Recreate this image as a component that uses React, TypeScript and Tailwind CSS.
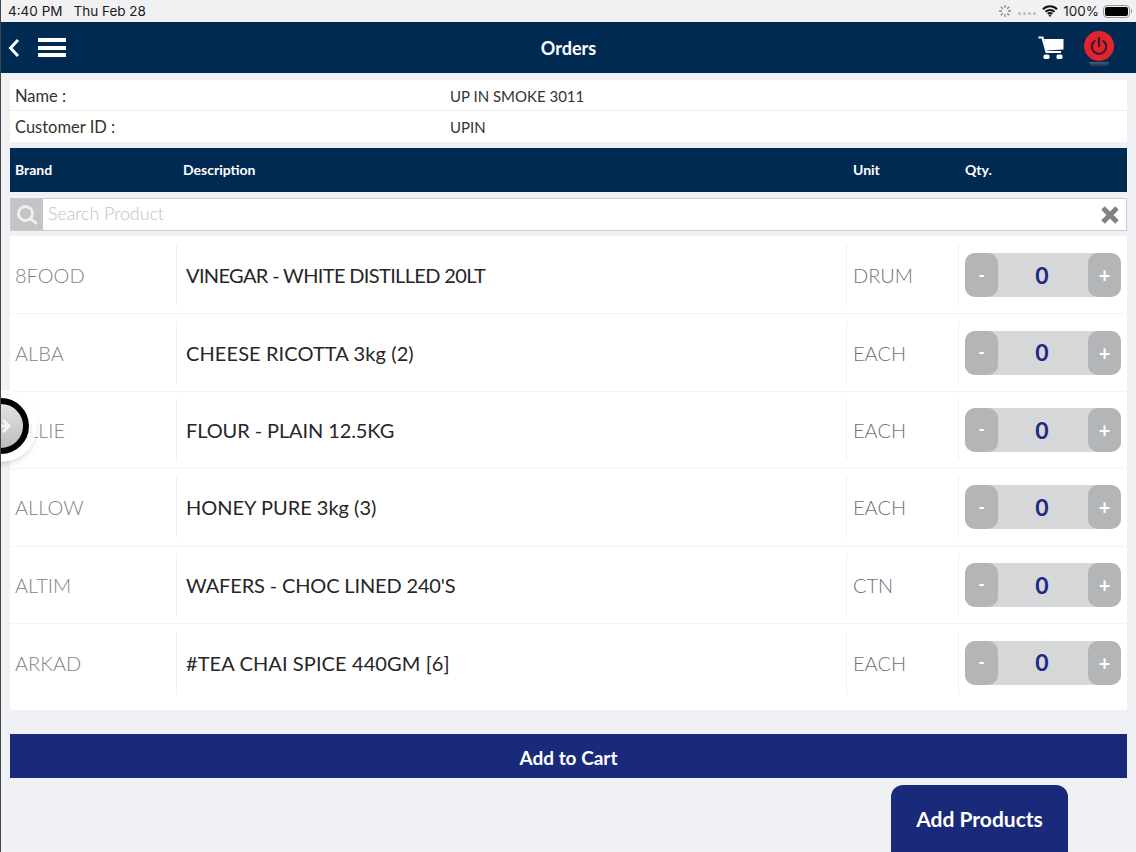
import React from 'react';

const products = [
  { brand: '8FOOD', description: 'VINEGAR - WHITE DISTILLED 20LT', unit: 'DRUM', descClass: 'tracking-[-0.65px]' },
  { brand: 'ALBA', description: 'CHEESE RICOTTA 3kg (2)', unit: 'EACH', descClass: 'tracking-[0.1px]' },
  { brand: 'ALLIE', description: 'FLOUR - PLAIN 12.5KG', unit: 'EACH', descClass: 'tracking-[-0.1px]' },
  { brand: 'ALLOW', description: 'HONEY PURE 3kg (3)', unit: 'EACH', descClass: '' },
  { brand: 'ALTIM', description: "WAFERS - CHOC LINED 240'S", unit: 'CTN', descClass: 'tracking-[-0.15px]' },
  { brand: 'ARKAD', description: '#TEA CHAI SPICE 440GM [6]', unit: 'EACH', descClass: 'tracking-[0.1px]' },
];

const StatusBar = () => (
  <div className="h-[22px] flex items-center justify-between pl-[7px] pr-[4px] bg-[#f1f1f3] text-[13.5px] text-[#1a1a1a] font-['Inter',sans-serif]">
    <div className="flex gap-[11px]">
      <span>4:40 PM</span>
      <span>Thu Feb 28</span>
    </div>
    <div className="flex items-center">
      <svg width="14" height="14" viewBox="0 0 14 14" stroke="#888" strokeWidth="1.3" className="mr-[6px]">
        <path d="M7 1v3M7 10v3M1 7h3M10 7h3M2.8 2.8l2 2M9.2 9.2l2 2M2.8 11.2l2-2M9.2 4.8l2-2" />
      </svg>
      <div className="flex gap-[2px] mr-[6px] mt-[4px]">
        <span className="w-[3px] h-[3px] rounded-full bg-[#bbb]" />
        <span className="w-[3px] h-[3px] rounded-full bg-[#bbb]" />
        <span className="w-[3px] h-[3px] rounded-full bg-[#bbb]" />
        <span className="w-[3px] h-[3px] rounded-full bg-[#bbb]" />
      </div>
      <svg width="16" height="12" viewBox="0 0 16 12" fill="none" stroke="#111" strokeWidth="2" className="mr-[5px]">
        <path d="M1 4.2a10 10 0 0 1 14 0M3.5 6.8a6.4 6.4 0 0 1 9 0M5.8 9a3 3 0 0 1 4.4 0" />
        <circle cx="8" cy="10.6" r="0.7" fill="#111" strokeWidth="1" />
      </svg>
      <span className="mr-[4px]">100%</span>
      <div className="w-[27px] h-[13px] rounded-[4px] border border-[#999] p-[1px]">
        <div className="w-full h-full rounded-[2px] bg-black" />
      </div>
      <span className="w-[1px] h-[4px] bg-[#999] ml-[1px]" />
    </div>
  </div>
);

const CartIcon = () => (
  <svg width="26" height="24" viewBox="0 0 26 24" fill="none">
    <path d="M0.5 1.5 H4.5 L8.5 16 H23" stroke="white" strokeWidth="2.2" />
    <path d="M6 3 H25.5 V13.5 L8.6 14.5 Z" fill="white" />
    <rect x="5.5" y="18.5" width="6" height="4.5" rx="1.5" fill="white" />
    <rect x="18.5" y="18.5" width="6" height="4.5" rx="1.5" fill="white" />
  </svg>
);

const PowerButton = () => (
  <div className="relative -mt-[3px] w-[30px] h-[30px] rounded-full bg-[#e0262c] flex items-center justify-center">
    <svg width="20" height="20" viewBox="0 0 20 20" fill="none" stroke="#3f1533" strokeWidth="2.2" strokeLinecap="round">
      <path d="M5.6 5a7.2 7.2 0 1 0 8.8 0M10 2v8" />
    </svg>
    <div className="absolute left-[5px] top-[31px] w-[20px] h-[5px] rounded-b-full bg-gradient-to-b from-[#5a5a70] to-transparent" />
  </div>
);

const NavBar = () => (
  <div className="h-[51px] bg-[#012a52] flex items-center text-white">
    <div className="flex-1 flex items-center gap-[18px] pl-[6px] pr-[22px]">
      <svg width="13" height="20" viewBox="0 0 13 20" fill="none" stroke="white" strokeWidth="3">
        <path d="M11 2 L3.5 10 L11 18" />
      </svg>
      <div className="flex flex-col gap-[3.5px] w-[28px]">
        <span className="h-[4px] bg-white" />
        <span className="h-[4px] bg-white" />
        <span className="h-[4px] bg-white" />
      </div>
    </div>
    <span className="pt-[1px] text-[18px] font-bold">Orders</span>
    <div className="flex-1 flex items-center justify-end gap-[20px] pl-[6px] pr-[22px]">
      <CartIcon />
      <PowerButton />
    </div>
  </div>
);

const Stepper = () => (
  <div className="w-[156px] h-[44px] rounded-[10px] bg-[#d6d7d9] flex items-center justify-between text-white">
    <div className="w-[33px] h-[44px] rounded-[10px] bg-[#b4b5b7] flex items-center justify-center font-bold text-[18px]">-</div>
    <span className="text-[23px] font-bold text-[#1c2a80] -translate-x-[1px]">0</span>
    <div className="w-[33px] h-[44px] rounded-[10px] bg-[#b4b5b7] flex items-center justify-center font-bold text-[20px]">+</div>
  </div>
);

const ProductRow: React.FC<{ brand: string; description: string; unit: string; descClass: string }> = ({ brand, description, unit, descClass }) => (
  <div className="h-[77.4px] flex items-center border-b border-[#f4f5f6] last:border-b-0">
    <div className="w-[167px] h-[62px] flex items-center pl-[5px] text-[#7f8186] font-light border-r border-[#f0f1f3]">{brand}</div>
    <div className={`w-[670px] h-[62px] flex items-center pl-[9px] text-[#262626] border-r border-[#f0f1f3] ${descClass}`}>{description}</div>
    <div className="w-[112px] h-[62px] flex items-center pl-[6px] text-[#6f7176] font-light border-r border-[#f0f1f3]">{unit}</div>
    <div className="pl-[6px]"><Stepper /></div>
  </div>
);

export default function App() {
  return (
    <div className="relative w-[1136px] h-[852px] overflow-hidden bg-[#f0f1f4] border-l border-[#444] font-['Lato',sans-serif]">
      <StatusBar />
      <NavBar />

      <div className="mx-[9px] mt-[7px]">
        <div className="bg-white text-[#333]">
          <div className="h-[31px] flex items-center pl-[5px] pt-[2px] border-b border-[#eee]">
            <span className="w-[435px] text-[16.5px]">Name :</span>
            <span className="text-[15px]">UP IN SMOKE 3011</span>
          </div>
          <div className="h-[31px] flex items-center pl-[5px] pt-[1px]">
            <span className="w-[435px] text-[16.5px]">Customer ID :</span>
            <span className="text-[15px]">UPIN</span>
          </div>
        </div>

        <div className="mt-[6px] h-[44px] bg-[#012a52] flex items-center pl-[5px] pb-[1px] text-white text-[14px] font-bold">
          <span className="w-[168px]">Brand</span>
          <span className="w-[670px]">Description</span>
          <span className="w-[112px]">Unit</span>
          <span>Qty.</span>
        </div>

        <div className="mt-[6px] h-[33px] flex bg-white border border-[#c9cacc]">
          <div className="w-[32px] bg-[#c3c4c6] flex items-center justify-center">
            <svg width="24" height="24" viewBox="0 0 24 24" fill="none" stroke="#eeeeee" strokeWidth="3" strokeLinecap="round">
              <circle cx="10.5" cy="10.5" r="7" />
              <path d="M16 16l5 4" />
            </svg>
          </div>
          <div className="flex-1 flex items-center pl-[5px] pb-[2px] text-[17.8px] text-[#c0c1c3] font-light">Search Product</div>
          <svg width="20" height="20" viewBox="0 0 20 20" stroke="#808184" strokeWidth="5" className="self-center mr-[6px]">
            <path d="M3 3l14 14M17 3L3 17" />
          </svg>
        </div>

        <div className="mt-[5px] pt-[1px] pb-[9px] bg-white rounded-[2px] text-[20px]">
          {products.map((p) => (
            <ProductRow key={p.brand} {...p} />
          ))}
        </div>

        <div className="mt-[24px] h-[44px] pt-[3px] bg-[#1a2a7a] flex items-center justify-center text-white text-[19px] font-bold">
          Add to Cart
        </div>

        <div className="flex justify-end pr-[59px] mt-[7px]">
          <div className="w-[177px] h-[80px] pt-[18px] text-center bg-[#1a2a7a] rounded-t-[12px] text-white text-[21px] font-bold">
            Add Products
          </div>
        </div>
      </div>

      <div className="absolute left-[-36px] top-[390px] w-[72px] h-[72px] rounded-full bg-white/80 shadow-md flex items-center justify-center">
        <div className="w-[56px] h-[56px] rounded-full border-[6px] border-black bg-gradient-to-b from-[#e2e2e2] to-[#bdbdbd] flex items-center justify-end pr-[12px]">
          <svg width="11" height="16" viewBox="0 0 11 16" fill="none" stroke="#f4f4f4" strokeWidth="3">
            <path d="M3 2l6 6-6 6M0 8h8" />
          </svg>
        </div>
      </div>
    </div>
  );
}
